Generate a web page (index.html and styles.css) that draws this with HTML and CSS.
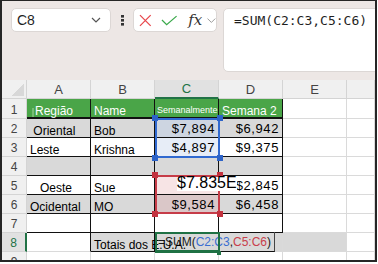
FILE: index.html
```html
<!DOCTYPE html>
<html lang="pt">
<head>
  <meta charset="UTF-8" />
  <title>Planilha - Totais</title>
  <link rel="stylesheet" href="styles.css">
</head>
<body>
  <div class="window">
    <div class="toolbar">
      <div class="namebox">
        <span>C8</span>
        <svg width="10" height="6" viewBox="0 0 10 6"><path d="M1 1l4 4 4-4" fill="none" stroke="#555" stroke-width="1.2"/></svg>
      </div>
      <div class="dots">
        <svg width="3" height="11" viewBox="0 0 3 11"><rect x="0" y="0" width="3" height="2.6" fill="#333"/><rect x="0" y="4" width="3" height="2.6" fill="#333"/><rect x="0" y="8" width="3" height="2.6" fill="#333"/></svg>
      </div>
      <div class="fxbox">
        <svg class="cancel" width="13" height="13" viewBox="0 0 13 13"><path d="M1 1l11 11M12 1L1 12" fill="none" stroke="#e8474c" stroke-width="1.3"/></svg>
        <svg class="enter" width="17" height="11" viewBox="0 0 17 11"><path d="M1 5l4.8 4.8L16 1" fill="none" stroke="#3aa94b" stroke-width="1.3"/></svg>
        <span class="fx">fx</span>
        <svg class="more" width="9" height="5" viewBox="0 0 9 5"><path d="M0.5 0.5l4 4 4-4" fill="none" stroke="#999" stroke-width="1"/></svg>
      </div>
      <div class="formula">=SUM(C2:C3,C5:C6)</div>
    </div>

    <div class="sheet">
      <div class="grid">
        <div class="hd corner"></div><div class="hd">A</div><div class="hd">B</div><div class="hd on">C</div><div class="hd">D</div><div class="hd">E</div><div class="hd"></div>

        <div class="rh">1</div><div class="t h"><span class="caret"></span>Região</div><div class="t h">Name</div><div class="t h tiny">Semanalmente</div><div class="t h">Semana 2</div><div></div><div></div>

        <div class="rh">2</div><div class="t g"> Oriental</div><div class="t g">Bob</div><div class="t n sb">$7,894</div><div class="t g n">$6,942</div><div></div><div></div>

        <div class="rh">3</div><div class="t">Leste</div><div class="t">Krishna</div><div class="t n sl">$4,897</div><div class="t n">$9,375</div><div></div><div></div>

        <div class="rh">4</div><div class="t g"></div><div class="t g"></div><div class="t g"></div><div class="t g"></div><div></div><div></div>

        <div class="rh">5</div><div class="t">   Oeste</div><div class="t">Sue</div><div class="t big pk"><span>$7.835E</span></div><div class="t n">$2,845</div><div></div><div></div>

        <div class="rh">6</div><div class="t g">Ocidental</div><div class="t g">MO</div><div class="t n sr">$9,584</div><div class="t g n">$6,458</div><div></div><div></div>

        <div class="rh">7</div><div class="t"></div><div class="t"></div><div class="t"></div><div class="t"></div><div></div><div></div>

        <div class="rh on">8</div><div class="t a8"></div><div class="t g"><span class="over">Totais dos E.U.A.</span></div><div class="g"></div><div class="g"></div><div class="g"></div><div></div>

        <div class="rh">9</div><div></div><div></div><div></div><div></div><div></div><div></div>
      </div>

      <div class="sel blue">
        <i class="hdl tl"></i><i class="hdl tr"></i><i class="hdl bl"></i><i class="hdl br"></i>
      </div>
      <div class="sel red">
        <i class="hdl tl"></i><i class="hdl tr"></i><i class="hdl bl"></i><i class="hdl br"></i>
      </div>
      <div class="editor">=SUM(<span class="ref1">C2:C3</span>,<span class="ref2">C5:C6</span>)</div>
      <div class="sel green"><i class="hdl br"></i></div>
    </div>
  </div>
</body>
</html>
```

FILE: styles.css
```css
body {
  margin: 0;
  background: #fff;
  font-family: "Liberation Sans", Arial, sans-serif;
}

.window {
  box-sizing: border-box;
  width: 377px;
  height: 262px;
  border: 2px solid #262626;
  border-top-width: 1px;
  background: #ede7e5;
  overflow: hidden;
  display: flex;
  flex-direction: column;
}

/* barra de fórmulas */
.toolbar {
  flex: none;
  display: flex;
  align-items: flex-start;
  padding: 7px 0 8px 9px;
}

.toolbar > * {
  flex: none;
}

.namebox {
  box-sizing: border-box;
  width: 100px;
  height: 24px;
  background: #fff;
  border: 1px solid #dcd7d5;
  border-radius: 5px;
  display: flex;
  align-items: center;
  justify-content: space-between;
  padding: 0 9px 0 5px;
  font-size: 14px;
  color: #1f1f1f;
}

.dots {
  width: 22px;
  height: 24px;
  display: flex;
  align-items: center;
  justify-content: center;
}

.fxbox {
  box-sizing: border-box;
  width: 84px;
  height: 24px;
  background: #fff;
  border: 1px solid #dcd7d5;
  border-radius: 5px;
  display: flex;
  align-items: center;
  padding-left: 5px;
}

.fxbox .enter { margin-left: 9px; }

.fx {
  margin-left: 11px;
  font-family: "DejaVu Serif", serif;
  font-style: italic;
  font-size: 15px;
  line-height: 16px;
  color: #333;
}

.fxbox .more { margin-left: 5px; }

.formula {
  box-sizing: border-box;
  width: 175px;
  height: 64px;
  margin-left: 6px;
  background: #fff;
  border: 1px solid #dcd7d5;
  border-radius: 5px;
  padding: 4px 10px;
  font-family: "DejaVu Sans Mono", monospace;
  font-size: 13px;
  line-height: 16px;
  color: #1f1f1f;
}

/* planilha */
.sheet {
  flex: none;
  position: relative;
}

.grid {
  display: grid;
  grid-template-columns: 25px repeat(5, 64px) 28px;
  grid-template-rows: 19px 20px repeat(8, 19px);
  font-size: 12px;
  color: #000;
}

.grid > div {
  box-sizing: border-box;
  border-right: 1px solid #dadada;
  border-bottom: 1px solid #dadada;
  background: #fff;
  display: flex;
  align-items: flex-end;
  padding-left: 3px;
  white-space: pre;
  line-height: 12px;
}

.grid > .hd {
  background: #f0f0f0;
  border-color: #d4d4d4;
  justify-content: center;
  align-items: center;
  padding: 1px 0 0;
  font-size: 13px;
  color: #444;
}

.grid > .corner {
  background: linear-gradient(to bottom right, transparent 50%, #d8d8d8 50%) no-repeat right 2px bottom 2px / 12px 13px, #f0f0f0;
}

.grid > .rh {
  background: #f0f0f0;
  border-color: #d4d4d4;
  justify-content: center;
  align-items: center;
  padding: 2px 0 0;
  color: #444;
}

.grid > .hd.on {
  background: #e1e1e1;
  color: #217346;
  border-bottom: 2px solid #217346;
}

.grid > .rh.on {
  background: #e1e1e1;
  color: #217346;
  border-right: 2px solid #217346;
}

.grid > .t { border-color: #111; }
.grid > .a8 { border-bottom-color: #dadada; }
.grid > .g { background: #d9d9d9; }

.grid > .h {
  background: #4aa548;
  color: #fff;
  border-bottom-width: 2px;
}

.grid > .h.tiny {
  font-size: 9px;
  line-height: 10px;
  padding: 0 0 2px 2px;
}

.caret {
  display: inline-block;
  width: 2px;
  height: 9px;
  margin: 0 1px 0 2px;
  background: #78bd75;
}

.grid > .n {
  justify-content: flex-end;
  padding: 0 3px 2px 0;
  font-size: 13px;
  line-height: 13px;
  letter-spacing: 0.6px;
}

.grid > .sb { background: #cdd5e1; }
.grid > .sl { background: #e7edf7; }
.grid > .pk { background: #f7e4e5; }
.grid > .sr { background: #dac7c8; }

.grid > .big {
  align-items: flex-start;
  padding: 1px 0 0 22px;
}

.big span {
  position: relative;
  z-index: 3;
  display: inline-block;
  background: #fff;
  font-size: 16px;
  line-height: 12px;
  padding-bottom: 2px;
}

.over {
  position: relative;
  z-index: 2;
}

/* seleções */
.sel {
  position: absolute;
  box-sizing: border-box;
  z-index: 1;
  border: 2px solid;
}

.sel.blue {
  left: 153px;
  top: 38px;
  width: 65px;
  height: 40px;
  border-color: #3069d0;
}

.sel.red {
  left: 153px;
  top: 95px;
  width: 65px;
  height: 39px;
  border-color: #c63c48;
}

.sel.green {
  left: 153px;
  top: 152px;
  width: 65px;
  height: 21px;
  border-color: #1f7144;
  border-bottom-width: 3px;
  z-index: 2;
}

.hdl {
  position: absolute;
  width: 6px;
  height: 6px;
}

.blue .hdl { background: #2d63c8; }
.red .hdl { background: #c2323f; }
.hdl.tl { left: -5px; top: -5px; }
.hdl.tr { right: -5px; top: -5px; }
.hdl.bl { left: -5px; bottom: -5px; }
.hdl.br { right: -5px; bottom: -5px; }

.green .hdl {
  width: 4px;
  height: 4px;
  right: -3px;
  bottom: -5px;
  background: #1f7144;
}

.editor {
  position: absolute;
  z-index: 1;
  box-sizing: border-box;
  left: 153px;
  top: 152px;
  width: 120px;
  height: 20px;
  border-right: 1px solid #444;
  border-bottom: 1px solid #111;
  padding-left: 3px;
  display: flex;
  align-items: center;
  white-space: pre;
  font-size: 12px;
  line-height: 12px;
  color: #1a1a1a;
}

.ref1 { color: #3b6fd1; }
.ref2 { color: #c8404b; }
```
